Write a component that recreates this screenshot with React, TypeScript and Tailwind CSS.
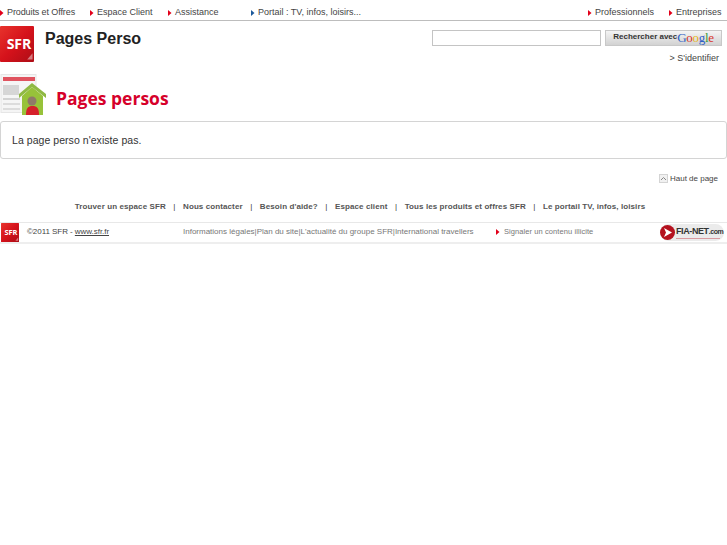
import React from "react";

const font = "font-['Liberation_Sans',Arial,sans-serif]";

function Arrow({ color = "#e2001a" }: { color?: string }) {
  return (
    <svg width="4" height="6" viewBox="0 0 4 6" className="shrink-0">
      <path d="M0 0L3.5 3L0 6Z" fill={color} />
    </svg>
  );
}

function NavItem({ label, className, color }: { label: string; className: string; color?: string }) {
  return (
    <a className={"flex items-center gap-[3px] " + className}>
      <Arrow color={color} />
      <span>{label}</span>
    </a>
  );
}

function SfrLogo({ size, height, id }: { size: number; height: number; id: string }) {
  return (
    <svg width={size} height={height} viewBox="0 0 35 37" className="shrink-0">
      <defs>
        <linearGradient id={id} x1="0" y1="0" x2="1" y2="1">
          <stop offset="0" stopColor="#e8332c" />
          <stop offset="0.5" stopColor="#d5121b" />
          <stop offset="1" stopColor="#ad0d16" />
        </linearGradient>
      </defs>
      <rect width="35" height="37" rx="1" fill={"url(#" + id + ")"} />
      <path d="M28 34.5L33.5 34.5L33.5 28Z" fill="#ffffff" opacity="0.45" />
      <text x="7" y="24" fontSize="14.5" fontWeight="700" fill="#fff" fontFamily="'Open Sans',sans-serif" letterSpacing="-0.2">
        SFR
      </text>
    </svg>
  );
}

function PagesIcon() {
  return (
    <svg width="46" height="41" viewBox="0 0 46 41" className="shrink-0">
      <rect x="1" y="0.5" width="35" height="38" fill="#f5f5f5" stroke="#e6e6e6" />
      <rect x="3" y="3" width="32" height="4" fill="#e0535f" />
      <rect x="3" y="11" width="16" height="10" fill="#d6d6d6" />
      <rect x="3" y="24" width="17" height="2" fill="#d2d2d2" />
      <rect x="3" y="29" width="17" height="2" fill="#dcdcdc" />
      <rect x="3" y="34" width="17" height="2" fill="#dcdcdc" />
      <path d="M19 20L32 9L46 20L46 24L32 13L19 24Z" fill="#8fb944" />
      <path d="M22 22L32 13L43 22L43 41L22 41Z" fill="#97c23a" />
      <circle cx="32" cy="27" r="4.5" fill="#8f7a68" />
      <path d="M26 41C26 34 28 32 32.500 32C37 32 39 34 39 41Z" fill="#d5202a" />
    </svg>
  );
}

function FiaNet() {
  return (
    <div className="flex items-center w-[64px] h-[17px] rounded-full bg-[#ebebeb] mt-[1px] whitespace-nowrap">
      <svg width="15" height="15" viewBox="0 0 15 15" className="shrink-0">
        <circle cx="7.5" cy="7.5" r="7.5" fill="#b5121f" />
        <path d="M4 3L12 7.5L4 12L6 7.5Z" fill="#fff" />
      </svg>
      <div className="flex flex-col ml-[1px]">
        <span className="text-[9px] font-bold text-[#333] tracking-[-0.4px] leading-[9px]">
          FIA-NET<span className="text-[7px]">.com</span>
        </span>
        <div className="w-[44px] h-[1px] mt-[2px] bg-[#d99aa0]" />
      </div>
    </div>
  );
}

export default function App() {
  const links = [
    "Trouver un espace SFR",
    "Nous contacter",
    "Besoin d'aide?",
    "Espace client",
    "Tous les produits et offres SFR",
    "Le portail TV, infos, loisirs",
  ];
  return (
    <div className={font + " bg-white w-[727px] h-[545px] overflow-hidden text-[#444]"}>
      {/* nav */}
      <div className="flex items-center h-[21px] border-b border-[#bdbdbd] text-[9px] pt-[5px]">
        <NavItem label="Produits et Offres" className="ml-0 w-[90px] tracking-[-0.1px]" />
        <NavItem label="Espace Client" className="w-[78px]" />
        <NavItem label="Assistance" className="w-[83px]" />
        <NavItem label="Portail : TV, infos, loisirs..." className="w-[337px]" color="#1d5a9c" />
        <NavItem label="Professionnels" className="w-[81px]" />
        <NavItem label="Entreprises" className="" />
      </div>

      {/* header */}
      <div className="flex h-[50px] pt-[5px]">
        <SfrLogo size={34} height={36} id="sfrTop" />
        <h1 className="ml-[11px] text-[16px] font-bold text-[#222] leading-[26px]">Pages Perso</h1>
        <div className="ml-auto mr-[5px] flex flex-col items-end pt-[4px]">
          <div className="flex gap-[4px]">
            <input className="w-[169px] h-[16px] border border-[#c4c4c4] bg-white" />
            <button className="w-[117px] h-[16px] flex items-center justify-center pb-[2px] bg-gradient-to-b from-[#f4f4f4] to-[#d2d2d2] border border-[#c8c8c8] text-[8px] font-bold text-[#333] whitespace-nowrap">
              Rechercher avec
              <span className="font-['Liberation_Serif',serif] text-[13px] font-normal leading-none tracking-[-0.3px]">
                <span className="text-[#2f5fc4]">G</span>
                <span className="text-[#d9342b]">o</span>
                <span className="text-[#e7b416]">o</span>
                <span className="text-[#2f5fc4]">g</span>
                <span className="text-[#3b9b3a]">l</span>
                <span className="text-[#d9342b]">e</span>
              </span>
            </button>
          </div>
          <a className="text-[9px] mt-[6px] mr-[3px]">&gt; S'identifier</a>
        </div>
      </div>

      {/* title */}
      <div className="flex items-start h-[50px] pt-[3px]">
        <PagesIcon />
        <h2 className="ml-[10px] mt-[16px] font-['Open_Sans',sans-serif] font-bold text-[17.500px] text-[#d6002a] leading-none">
          Pages persos
        </h2>
      </div>

      {/* message */}
      <div className="w-[727px] h-[38px] border border-[#d4d4d4] rounded-[3px] flex items-center pl-[11px] pt-[1px] text-[10.5px] tracking-[0.05px] text-[#333]">
        La page perso n'existe pas.
      </div>

      {/* haut de page */}
      <div className="flex justify-end items-center gap-[2px] h-[16px] mt-[12px] pr-[9px] text-[8px]">
        <svg width="9" height="9" viewBox="0 0 9 9" className="mb-[2px]">
          <rect x="0.5" y="0.5" width="8" height="8" fill="#f1f1f1" stroke="#d4d4d4" />
          <path d="M2 6L4.5 3.5L7 6" fill="none" stroke="#888" />
        </svg>
        <span>Haut de page</span>
      </div>

      {/* liens */}
      <div className="flex justify-center items-center h-[14px] mt-[13px] pr-[7px] text-[8px] tracking-[0.1px] font-bold text-[#555]">
        {links.map((l, i) => (
          <React.Fragment key={l}>
            {i > 0 && <span className="mx-[7.500px] font-normal text-[#333]">|</span>}
            <a>{l}</a>
          </React.Fragment>
        ))}
      </div>

      {/* footer */}
      <div className="flex items-center h-[22px] mt-[8px] pb-[1px] border-t border-[#e8e8e8] border-b-2 border-b-[#eeeeee] text-[8px] text-[#777]">
        <div className="ml-[1px]">
          <SfrLogo size={18} height={19} id="sfrBottom" />
        </div>
        <span className="ml-[8px] text-[#444] tracking-[-0.05px] w-[156px]">
          ©2011 SFR - <u>www.sfr.fr</u>
        </span>
        <span className="w-[313px] whitespace-nowrap">
          Informations légales|Plan du site|L'actualité du groupe SFR|International travellers
        </span>
        <span className="flex items-center gap-[4px] text-[7.5px] tracking-[0.08px] w-[164px]">
          <Arrow />
          Signaler un contenu illicite
        </span>
        <FiaNet />
      </div>
    </div>
  );
}
